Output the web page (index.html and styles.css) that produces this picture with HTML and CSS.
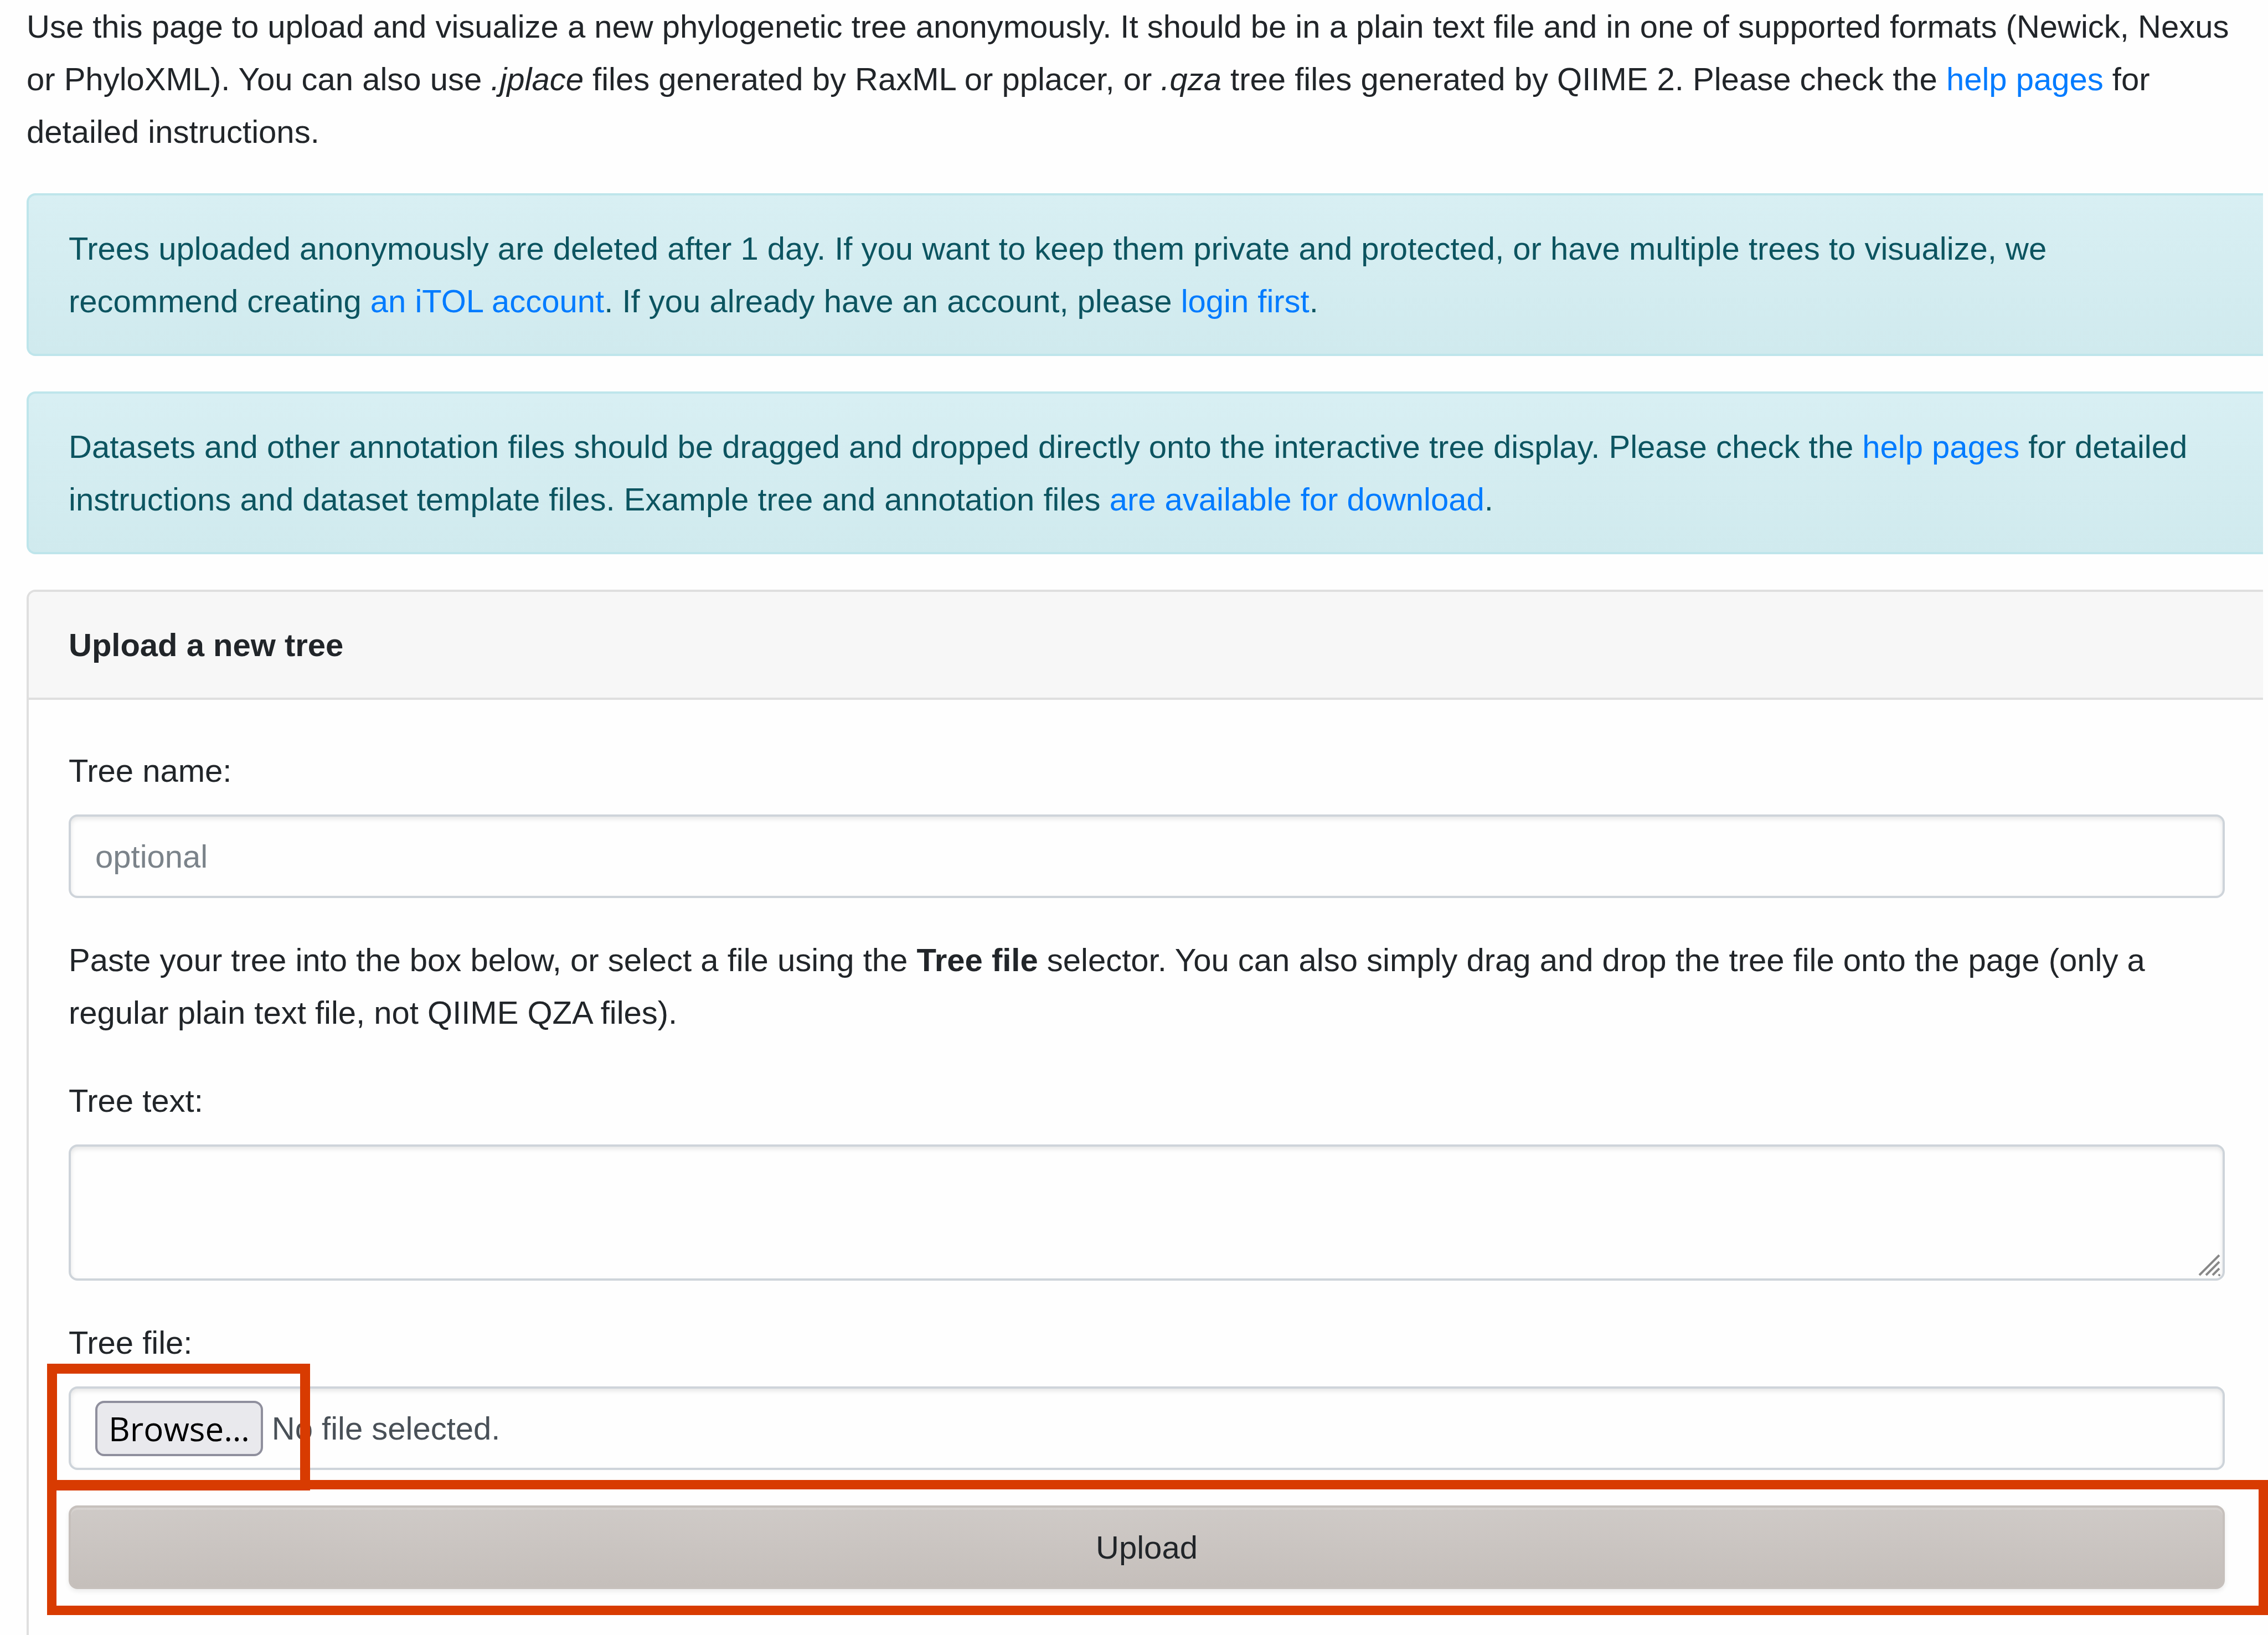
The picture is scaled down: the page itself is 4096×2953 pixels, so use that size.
FILE: index.html
```html
<!DOCTYPE html>
<html lang="en">
<head>
<meta charset="utf-8">
<title>Upload a tree</title>
<link rel="stylesheet" href="styles.css">
</head>
<body>
<main class="page">
  <p class="intro">Use this page to upload and visualize a new phylogenetic tree anonymously. It should be in a plain text file and in one of supported formats (Newick, Nexus or PhyloXML). You can also use <em>.jplace</em> files generated by RaxML or pplacer, or <em>.qza</em> tree files generated by QIIME 2. Please check the <a href="#">help pages</a> for detailed instructions.</p>
  <div class="alert">Trees uploaded anonymously are deleted after 1 day. If you want to keep them private and protected, or have multiple trees to visualize, we recommend creating <a href="#">an iTOL account</a>. If you already have an account, please <a href="#">login first</a>.</div>
  <div class="alert">Datasets and other annotation files should be dragged and dropped directly onto the interactive tree display. Please check the <a href="#">help pages</a> for detailed instructions and dataset template files. Example tree and annotation files <a href="#">are available for download</a>.</div>
  <section class="card">
    <h2 class="card-header">Upload a new tree</h2>
    <form class="card-body">
      <div class="field">
        <label class="label" for="tree-name">Tree name:</label>
        <input class="control" id="tree-name" type="text" placeholder="optional">
      </div>
      <p class="hint">Paste your tree into the box below, or select a file using the <strong>Tree file</strong> selector. You can also simply drag and drop the tree file onto the page (only a regular plain text file, not QIIME QZA files).</p>
      <div class="field">
        <label class="label" for="tree-text">Tree text:</label>
        <div class="textarea-wrap">
          <textarea class="control" id="tree-text"></textarea>
          <svg class="grip" viewBox="0 0 10 10" aria-hidden="true"><path d="M.5 9.5l9-9M3.5 9.5l6-6M6.500 9.5l3-3M9.200 9.800l.6-.6"/></svg>
        </div>
      </div>
      <div class="field">
        <label class="label" for="tree-file">Tree file:</label>
        <div class="control file-control">
          <input class="file-input" id="tree-file" type="file">
          <label class="browse" for="tree-file">Browse…</label>
          <span>No file selected.</span>
        </div>
        <div class="mark mark-browse"></div>
      </div>
      <div class="submit">
        <button class="upload" type="submit">Upload</button>
        <div class="mark mark-upload"></div>
      </div>
    </form>
  </section>
</main>
</body>
</html>
```

FILE: styles.css
```css
* { box-sizing: border-box; }

body {
  margin: 0;
  background: #fefefe;
  color: #212529;
  font: 58px/95px "Liberation Sans", Arial, sans-serif;
}

a { color: #007bff; text-decoration: none; }

.page {
  display: flex;
  flex-direction: column;
  min-height: 100vh;
  padding: 0 9px 0 48px;
  overflow: hidden;
}

.intro { margin: 0 0 64px; }

.alert {
  margin-bottom: 64px;
  padding: 48px 72px;
  border: 4px solid #bee5eb;
  border-right: 0;
  border-radius: 16px 0 0 16px;
  background: linear-gradient(#d8eff3, #d0eaee);
  color: #0c5460;
}

.card {
  flex: 1;
  border: 4px solid #dfdfdf;
  border-width: 4px 0 0 4px;
  border-radius: 16px 0 0 0;
}

.card-header {
  margin: 0;
  padding: 48px 72px;
  border-bottom: 4px solid #dfdfdf;
  border-radius: 12px 0 0 0;
  background: #f7f7f7;
  font-size: 58px;
}

.card-body { padding: 80px 69px 80px 72px; }

.field { position: relative; margin-bottom: 64px; }

.label { display: block; margin-bottom: 32px; }

.control {
  display: block;
  width: 100%;
  height: 151px;
  padding: 0 44px;
  border: 4px solid #ced4da;
  border-radius: 16px;
  background: #fefefe;
  box-shadow: inset 0 4px 8px rgba(0, 0, 0, .1);
  color: #495057;
  font: inherit;
}

.control::placeholder { color: #7b838a; opacity: 1; }

.hint { margin: 0 0 64px; }

.textarea-wrap { position: relative; }

textarea.control { height: 246px; resize: none; }

.grip {
  position: absolute;
  right: 8px;
  bottom: 8px;
  width: 40px;
  height: 40px;
  fill: none;
  stroke: #888;
  stroke-width: 1;
}

.file-control {
  display: flex;
  align-items: center;
  gap: 16px;
}

/* the native picker stays reachable; its label is the visible button */
.file-input {
  position: absolute;
  width: 1px;
  height: 1px;
  opacity: 0;
}

.browse {
  padding: 6px 20px;
  border: 4px solid #8f8f9d;
  border-radius: 16px;
  background: #e9e9ed;
  color: #000;
  font: 60px/80px "Open Sans", sans-serif;
}

.submit { position: relative; }

.upload {
  display: block;
  width: 100%;
  height: 151px;
  border: 4px solid #c6c0bc;
  border-radius: 16px;
  background: linear-gradient(#cfcac7, #c5bfbb);
  box-shadow: inset 0 4px 0 rgba(255, 255, 255, .15), 0 4px 8px rgba(0, 0, 0, .08);
  color: #212529;
  font: inherit;
}

/* highlight frames drawn over the controls */
.mark {
  position: absolute;
  border: 17px solid #d83b01;
  pointer-events: none;
}

.mark-browse {
  left: -39px;
  top: 86px;
  width: 475px;
  height: 229px;
  border-width: 18px;
}

.mark-upload { left: -39px; right: -78px; top: -46px; height: 244px; }
```
